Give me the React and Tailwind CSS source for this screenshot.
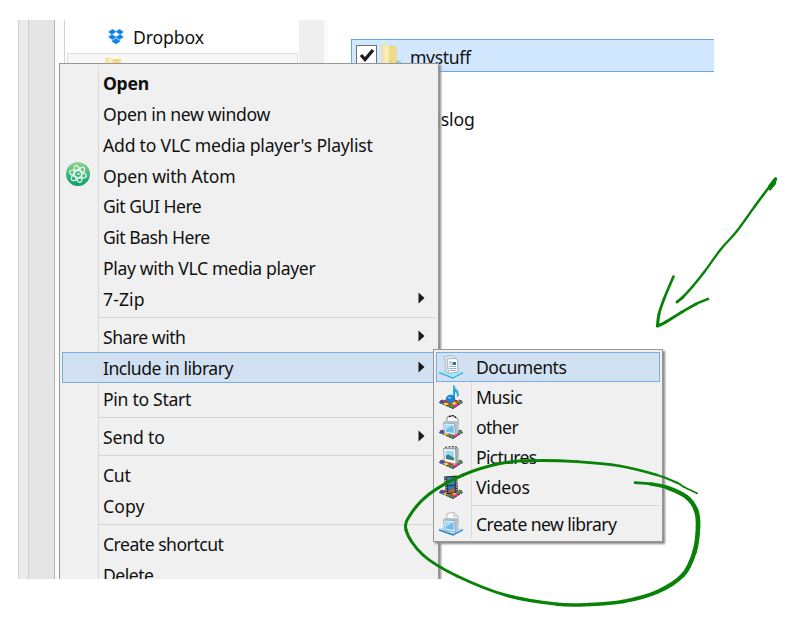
import React from 'react';

const mainItems = [
  { text: 'Open', cls: 'font-bold tracking-[-0.3px]' },
  { text: 'Open in new window', cls: 'tracking-[-0.33px]' },
  { text: "Add to VLC media player's Playlist", cls: 'tracking-[-0.21px]' },
  { text: 'Open with Atom', cls: 'tracking-[-0.16px]', icon: 'atom' },
  { text: 'Git GUI Here', cls: 'tracking-[-0.5px]' },
  { text: 'Git Bash Here', cls: 'tracking-[-0.5px]' },
  { text: 'Play with VLC media player', cls: 'tracking-[-0.35px]' },
  { text: '7-Zip', cls: 'tracking-[0.1px]', arrow: true },
  null,
  { text: 'Share with', cls: 'tracking-[-0.5px]', arrow: true },
  { text: 'Include in library', cls: 'tracking-[-0.5px]', arrow: true, active: true },
  { text: 'Pin to Start', cls: 'tracking-[-0.3px]' },
  null,
  { text: 'Send to', cls: 'tracking-[-0.15px]', arrow: true },
  null,
  { text: 'Cut', cls: 'tracking-[-0.3px]' },
  { text: 'Copy', cls: 'tracking-[0.1px]' },
  null,
  { text: 'Create shortcut', cls: 'tracking-[-0.5px]' },
  { text: 'Delete', cls: 'tracking-[-0.5px]' },
];

const libraries = [
  { text: 'Documents', icon: 'doc', active: true, cls: 'tracking-[-0.5px]' },
  { text: 'Music', icon: 'music', cls: 'tracking-[-0.4px]' },
  { text: 'other', icon: 'other', cls: 'tracking-[-0.6px]' },
  { text: 'Pictures', icon: 'picture', cls: 'tracking-[-0.7px]' },
  { text: 'Videos', icon: 'video', cls: 'tracking-[-0.2px]' },
];

function DropboxIcon() {
  return (
    <svg className="h-[15px] w-4 shrink-0" viewBox="0 0 16 15" fill="#0a84ea" stroke="#0a84ea" strokeWidth=".4">
      <path d="M4.6.2 8 2.7 3.9 5.4.5 2.9zM11.4.2 8 2.7l4.1 2.7 3.4-2.5zM.5 8 3.9 5.4 8 8l-3.4 2.7zM15.5 8l-3.4-2.6L8 8l3.4 2.7zM4 11.3l.7.4L8 9.2l3.3 2.5.7-.4v1.1L8 15l-4-2.6z" />
    </svg>
  );
}

function AtomIcon() {
  return (
    <svg className="-mt-0.5 size-6" viewBox="0 0 24 24" fill="none">
      <defs>
        <linearGradient id="atom" x1="0" y1="0" x2="0" y2="1">
          <stop offset="0" stopColor="#96d68c" />
          <stop offset="0.55" stopColor="#3db57e" />
          <stop offset="1" stopColor="#0b9c6c" />
        </linearGradient>
      </defs>
      <circle cx="12" cy="12" r="12" fill="url(#atom)" />
      <g stroke="#effbf2" strokeWidth="1.2">
        <ellipse cx="12" cy="12" rx="8.7" ry="3.5" transform="rotate(15 12 12)" />
        <ellipse cx="12" cy="12" rx="8.7" ry="3.5" transform="rotate(75 12 12)" />
        <ellipse cx="12" cy="12" rx="8.7" ry="3.5" transform="rotate(135 12 12)" />
      </g>
      <circle cx="12.5" cy="12" r="1.1" fill="#fff" />
    </svg>
  );
}

function FolderIcon({ className }) {
  return (
    <svg className={className} viewBox="0 0 22 24">
      <defs>
        <linearGradient id="fold" x1="0" y1="0" x2="1" y2="0">
          <stop offset="0" stopColor="#f3e08c" />
          <stop offset="0.5" stopColor="#fbf2c4" />
          <stop offset="1" stopColor="#e5ca62" />
        </linearGradient>
      </defs>
      <path d="M14 15 21.5 19 19 22H10z" fill="#a3b8c9" />
      <path d="M7 2h8.5v17L8 22z" fill="#ecd372" />
      <path d="M.5 1.5 5 .5l6 3.5.5 9-3 3V24L1.5 21z" fill="url(#fold)" stroke="#ead88c" strokeWidth=".5" />
      <path d="m10 5 5.5-3v16L10 22z" fill="#f0dc88" />
    </svg>
  );
}

function ColorBase() {
  return (
    <g>
      <path d="m0 17 11-4 13 4-10 7z" fill="#e0262c" />
      <path d="m0 17 4-1.5 3 1.5-4 2z" fill="#2e55c9" />
      <path d="m3 19 4-1.5 3 1.5-3 2z" fill="#f5e020" />
      <path d="m8 21 4-1.5 3 1.5-1.5 2.5z" fill="#28a648" />
      <path d="m14 20 3-1.5 3 1-3 2.5z" fill="#e636b5" />
      <path d="m17 17 3-1.5 4 1.5-3 2z" fill="#2aa84a" />
      <path d="m12 18 3-1.5 3 1.5-3 2z" fill="#f7df22" />
      <path d="m7 17 3-1.5 3 1-3 2z" fill="#e82323" />
      <path d="m.3 17.5 13.7 6 9.7-6" fill="none" stroke="#273071" strokeWidth="1" strokeDasharray="2 1.5" />
      <path d="m1 16 3-1M20 15l3 1" stroke="#6e3458" strokeWidth="1" />
    </g>
  );
}

function BlueBase() {
  return (
    <g>
      <path d="m0 17 9-3.5L24 17l-10 5.5z" fill="#a8e4fa" />
      <path d="m0 17 14 5.5L24 17v1.2l-10 5.6L0 18.3z" fill="#25a9e0" />
    </g>
  );
}

function Monitor() {
  return (
    <g>
      <path d="m4 8 2-2h12l2 2-1 10-3 2z" fill="#b7c2cc" />
      <path d="m4.5 8 11 .5 1 11.5-11-2z" fill="#eef5fa" stroke="#7e9cb3" strokeWidth=".8" />
      <path d="m6 9.7 8.3.4.6 7.9-8-1.2z" fill="#6fbcea" />
      <path d="m6 9.7 8.3.4-7.8 4.9z" fill="#b0dcf5" />
    </g>
  );
}

function LibraryIcon({ kind }) {
  return (
    <svg className="size-6 shrink-0" viewBox="0 0 24 24">
      {kind === 'doc' && (
        <g>
          <BlueBase />
          <path d="M5.5 1.5 14 .5l2 2.5v13.5l-9 1.5z" fill="#e4eaf0" stroke="#9eabb9" strokeWidth=".7" />
          <path d="m8 4 8-.7 2.5 2L19 17l-9.5 1.5z" fill="#fafcfe" stroke="#93a2b2" strokeWidth=".8" />
          <path d="M10 7h3M10 9h2.5M10.2 11.5h7M10.3 13.5h7M10.5 15.5h6" stroke="#8796aa" strokeWidth=".8" />
          <path d="M13.5 7h3.5v3h-3.5z" fill="#3470a0" />
        </g>
      )}
      {kind === 'music' && (
        <g>
          <ColorBase />
          <path d="M14 14V.5l1.5-.5c0 3 4.5 5 4.5 8.5 0 2-1 3.5-2 4 .7-3.5-.5-4.5-2-5.5v9z" fill="#29a4df" />
          <path d="M15.5 1c.5 3 4 4.5 4 7.5" fill="none" stroke="#8edcf5" />
          <ellipse cx="11.5" cy="14" rx="4.7" ry="4.3" fill="#1784ca" />
          <ellipse cx="10.5" cy="12.7" rx="2" ry="1.3" fill="#54b9eb" />
        </g>
      )}
      {kind === 'other' && (
        <g>
          <ColorBase />
          <path d="M8 7V2l6-1.5 5 3.5v4z" fill="#fafafa" stroke="#777" strokeWidth=".8" />
          <path d="M10 1.5 14 .5l4 3" fill="none" stroke="#111" strokeWidth="1.3" strokeDasharray="2 1" />
          <Monitor />
        </g>
      )}
      {kind === 'picture' && (
        <g>
          <ColorBase />
          <path d="m5 3 12-1 3 2-1 14-3 1.5z" fill="#a9b0b5" />
          <path d="m4.5 3.5 12 .5.5 15-11.5-2.500z" fill="#f9fbfc" stroke="#858e95" strokeWidth=".8" />
          <path d="m6.500 5.500 8.300.4.400 9.500-8.200-1.500z" fill="#9ed8f2" />
          <path d="m6.800 10.500 2.700-1 5.600 3.500v2.400l-8.100-1.500z" fill="#3a7f85" />
          <path d="m6 2.300 10-1 3 1.700" fill="none" stroke="#333" strokeDasharray="2 1.5" />
        </g>
      )}
      {kind === 'video' && (
        <g>
          <ColorBase />
          <path d="M5 1.5 18 .5l1 17-12 2z" fill="#2b3440" />
          <path d="m8 2.5 7.5-.3.3 7.3L8.700 10z" fill="#3d87bd" />
          <path d="m8.700 11 7.200-.5.3 6.500-6.700 1z" fill="#2d76b4" />
          <path d="m10 15 3-2 3 1v3l-6.300 1z" fill="#a8643b" />
          <path d="m6.300 2.500 1.200 16M17 2l1 15.500" stroke="#d7dde2" strokeWidth="1" strokeDasharray="1.2 1.2" />
        </g>
      )}
      {kind === 'new' && (
        <g>
          <path d="m0 17 9-3 15 3-10 5z" fill="#b9e0f7" />
          <path d="m0 17 14 5 10-5v1.500l-10 5.300-14-5z" fill="#2f86c9" />
          <path d="M8 7V1.500L15 .3 19 4v5z" fill="#fafafa" stroke="#a9aeb3" strokeWidth=".8" />
          <path d="m15 .3-.5 4L19 4" fill="#e1e5e8" stroke="#a9aeb3" strokeWidth=".6" />
          <Monitor />
        </g>
      )}
    </svg>
  );
}

function MenuRow({ item }) {
  if (!item) {
    return (
      <div className="flex h-[7.2px] items-center pl-[37px]">
        <div className="h-px w-full bg-[#d5d5d5]" />
      </div>
    );
  }
  return (
    <div
      className={`flex h-[30.86px] items-center ${
        item.active ? 'bg-[#d1e1f2] outline-1 -outline-offset-1 outline-[#78aee5]' : ''
      }`}
    >
      <div className="flex w-[41px] shrink-0 items-center pl-1">{item.icon && <AtomIcon />}</div>
      <span className={`mt-px flex-1 whitespace-nowrap ${item.cls}`}>{item.text}</span>
      {item.arrow && (
        <svg className="mr-[11px] h-3 w-[7px]" viewBox="0 0 7 12">
          <path d="M.5.5 6.5 6l-6 5.5z" fill="#1a1a1a" />
        </svg>
      )}
    </div>
  );
}

function LibraryRow({ text, icon, active, cls }) {
  return (
    <div
      className={`flex h-[30.1px] items-center pl-[3px] ${
        active ? 'bg-[#d1e1f2] outline-1 -outline-offset-1 outline-[#78aee5]' : ''
      }`}
    >
      <LibraryIcon kind={icon} />
      <span className={`ml-[13px] whitespace-nowrap ${cls}`}>{text}</span>
    </div>
  );
}

// Pen strokes: [x, y, width] samples joined by Catmull-Rom curves.
const loop = [
  [635, 482.7, 2.6], [651, 484, 3], [667, 487.5, 3.8], [686.5, 497, 4.3], [696, 510, 4.7], [698, 527, 4.7],
  [694.5, 552, 4.4], [683, 575, 4.2], [657, 592, 3.9], [623, 601.5, 3.7], [590, 604.5, 3.5],
  [557, 604.2, 3.3], [507, 595.5, 3.1], [457, 576, 3], [423, 555, 3], [406, 530, 3],
  [411.5, 513, 3], [430, 493.5, 3], [463, 475, 3], [500, 463.5, 3], [533, 460.6, 3],
  [577, 461.6, 2.8], [620, 466, 2.6], [657, 475, 2.3], [677, 482.7, 2], [684, 487, 1.9], [697, 493.3, 1.8],
];
const shaft = [
  [775.5, 179, 4.2], [770, 186, 2.8], [755, 206, 2.3], [737, 231, 2.3], [721, 249, 2.3], [705, 271, 2.4],
  [693, 286, 2.5], [683, 297, 2.7], [677, 302, 3.1],
];
const head = [[673.5, 276.5, 2.6], [664, 299, 2.6], [659, 314, 2.9], [657.5, 325.5, 3.2]];
const barb = [[657.5, 326, 3.3], [665, 322.5, 2.9], [682, 312, 2.9], [696, 304, 2.7], [708, 299, 2.6]];

function Pen({ pts }) {
  return pts.slice(0, -1).map((b, i) => {
    const a = pts[i - 1] || b;
    const c = pts[i + 1];
    const d = pts[i + 2] || c;
    const path = `M${b[0]} ${b[1]}C${b[0] + (c[0] - a[0]) / 6} ${b[1] + (c[1] - a[1]) / 6} ${
      c[0] - (d[0] - b[0]) / 6
    } ${c[1] - (d[1] - b[1]) / 6} ${c[0]} ${c[1]}`;
    return <path key={i} d={path} strokeWidth={(b[2] + c[2]) / 2} />;
  });
}

export default function App() {
  return (
    <div className="relative h-[631px] w-[806px] overflow-hidden bg-white pt-5 font-['Noto_Sans','Open_Sans',sans-serif] text-[17.6px] leading-6 text-[#111]">
      <div className="relative ml-[18px] flex h-[559px] w-[788px] overflow-hidden">
        <div className="w-[11px] shrink-0 border-x border-[#cfcfcf] bg-[#ebebeb]" />
        <div className="w-[26px] shrink-0 border-r border-[#b5b5b5] bg-[#e5e5e5]" />
        <div className="w-[10px] shrink-0 border-r border-[#d2d2d2] bg-[#fcfcfc]" />
        <div className="w-[234px] shrink-0 pl-0.5">
          <div className="flex h-[33px] items-center pl-[41px]">
            <DropboxIcon />
            <span className="ml-[9px] tracking-[-0.1px]">Dropbox</span>
          </div>
          <div className="h-[31px] w-[231px] border border-[#dedede] bg-[#f7f7f7] pl-[37px] pt-[3px]">
            <FolderIcon className="h-6 w-[22px]" />
          </div>
        </div>
        <div className="w-[25px] shrink-0 bg-[#efefef]" />
        <div className="w-1 shrink-0 bg-[#fafafa]" />
        <div className="flex-1 pl-[23px] pt-[19px]">
          <div className="flex h-[33px] w-[363px] items-start border-y border-l border-[#66a7e8] bg-[#d1e8ff] pl-1 pt-[5px]">
            <div className="flex size-[21px] items-center justify-center border border-[#707070] bg-white">
              <svg className="-mt-0.5 size-4" viewBox="0 0 16 16" fill="none">
                <path d="m2 8 4 4.5L14 3" stroke="#1b1b1b" strokeWidth="3.3" />
              </svg>
            </div>
            <FolderIcon className="-mt-px ml-1 h-6 w-[22px]" />
            <span className="ml-[7px] tracking-[-0.35px]">mystuff</span>
          </div>
          <div className="mt-[35px] pl-[79px] tracking-[-0.1px]">nslog</div>
        </div>

        <div className="absolute left-[41px] top-[43px] h-[530px] w-[380px] border border-[#979797] bg-[#f0f0f0] px-0.5 pt-[3px] shadow-[2px_2px_2px_#8a8a8a]">
          <div className="absolute bottom-0 left-[38px] top-0.5 w-px bg-[#dadada]" />
          <div className="relative">
            {mainItems.map((item, i) => (
              <MenuRow key={i} item={item} />
            ))}
          </div>
        </div>

        <div className="absolute left-[415px] top-[329px] h-[193px] w-[230px] border border-[#979797] bg-[#f0f0f0] px-0.5 pt-[2px] shadow-[2px_2px_2px_#8a8a8a]">
          <div className="absolute bottom-[3px] left-[37px] top-0.5 w-px bg-[#dadada]" />
          <div className="relative">
            {libraries.map((lib) => (
              <LibraryRow key={lib.text} {...lib} />
            ))}
            <div className="flex h-[6px] items-center pl-[36px]">
              <div className="h-px w-full bg-[#d5d5d5]" />
            </div>
            <LibraryRow text="Create new library" icon="new" cls="tracking-[-0.56px]" />
          </div>
        </div>
      </div>

      <svg
        className="pointer-events-none absolute inset-0 h-[631px] w-[806px]"
        viewBox="0 0 806 631"
        fill="none"
        stroke="#078207"
        strokeLinecap="round"
        strokeLinejoin="round"
      >
        <Pen pts={loop} />
        <Pen pts={shaft} />
        <Pen pts={head} />
        <Pen pts={barb} />
        <path d="m770 189.5.5-4.5 5-6.5-.5 5z" strokeWidth="2" fill="#078207" />
      </svg>
    </div>
  );
}
